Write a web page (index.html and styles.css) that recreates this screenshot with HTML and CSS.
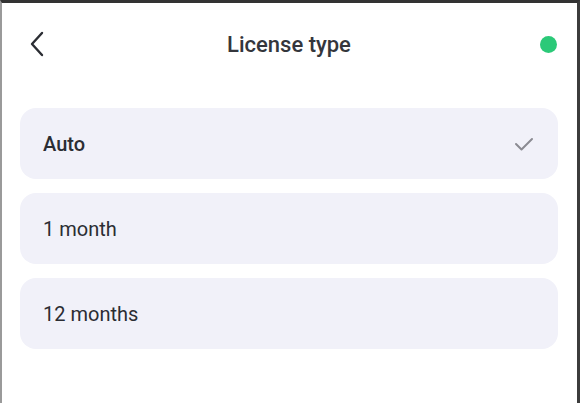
FILE: index.html
```html
<!DOCTYPE html>
<html lang="en">
<head>
  <meta charset="UTF-8" />
  <meta name="viewport" content="width=device-width, initial-scale=1.0"/>
  <title>License type</title>
  <link rel="stylesheet" href="styles.css">
</head>
<body>
  <div class="screen">
    <div class="header">
      <button class="back" aria-label="Back">
        <svg width="16" height="26" viewBox="0 0 16 26">
          <path d="M13 2 L3 13 L13 24" fill="none" stroke="#2b2d33" stroke-width="2.4" stroke-linecap="round" stroke-linejoin="round"/>
        </svg>
      </button>
      <h1 class="title">License type</h1>
      <span class="status"></span>
    </div>

    <div class="options">
      <div class="option selected">
        <span>Auto</span>
        <svg class="check" width="20" height="14" viewBox="0 0 20 14">
          <path d="M2 7 L7.5 12.5 L18 2" fill="none" stroke="#8b8b92" stroke-width="2" stroke-linecap="round" stroke-linejoin="round"/>
        </svg>
      </div>
      <div class="option"><span>1 month</span></div>
      <div class="option"><span>12 months</span></div>
    </div>
  </div>
</body>
</html>
```

FILE: styles.css
```css
html, body {
  margin: 0;
  height: 100%;
}

body {
  font-family: Roboto, "Noto Sans", sans-serif;
  color: #2b2d33;
  background: #fff;
}

.screen {
  box-sizing: border-box;
  height: 100%;
  border-top: 3px solid #333;
  border-left: 2px solid #9a9a9a;
  border-right: 3px solid #3c3c3c;
  padding: 0 19px 0 18px;
}

.header {
  height: 82px;
  display: grid;
  grid-template-columns: 1fr auto 1fr;
  align-items: center;
}

.back {
  justify-self: start;
  background: none;
  border: 0;
  padding: 0;
  margin-left: 9px;
  display: flex;
  cursor: pointer;
}

.title {
  margin: 0;
  font-size: 22px;
  font-weight: 500;
  color: #34363c;
}

.status {
  justify-self: end;
  width: 17px;
  height: 17px;
  border-radius: 50%;
  background: #2bc978;
  margin-right: 1px;
}

.options {
  margin-top: 23px;
  display: flex;
  flex-direction: column;
  gap: 14px;
}

.option {
  height: 71px;
  border-radius: 16px;
  background: #f1f1f9;
  display: flex;
  align-items: center;
  justify-content: space-between;
  padding: 0 24px 0 23px;
  font-size: 20px;
  color: #2b2d33;
}

.option.selected {
  font-weight: 500;
}
```
